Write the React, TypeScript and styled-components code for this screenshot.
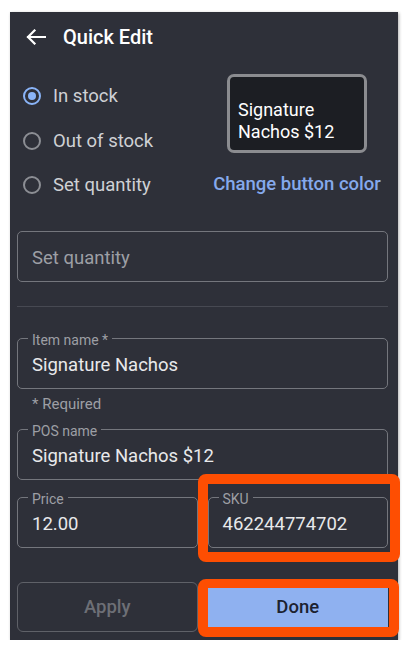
import React from "react";
import styled, { createGlobalStyle } from "styled-components";

const PANEL_BG = "#2e3039";
const FIELD_BORDER = "#74767d";
const MUTED = "#9d9fa5";
const ACCENT = "#8ab4f8";
const MARK = "#fe4e02";

const GlobalStyle = createGlobalStyle`
  body {
    margin: 0;
    background: #ffffff;
    font-family: Roboto, "Noto Sans", sans-serif;
  }
  * {
    box-sizing: border-box;
  }
`;

const Panel = styled.div`
  width: 388px;
  height: 628px;
  margin: 12px 0 0 10px;
  padding: 0 10px 0 7px;
  background: ${PANEL_BG};
  box-shadow: 1px 1px 3px rgba(0, 0, 0, 0.3);
  display: flex;
  flex-direction: column;
`;

const Header = styled.div`
  height: 50px;
  display: flex;
  align-items: center;
  gap: 17px;
  padding-left: 9px;
  color: #ffffff;
`;

const Title = styled.h1`
  margin: 0;
  font-size: 20px;
  font-weight: 500;
  line-height: 24px;
`;

const TopSection = styled.div`
  display: grid;
  grid-template-columns: 196px 168px;
  margin-top: 12px;
`;

const RadioGroup = styled.div`
  display: flex;
  flex-direction: column;
`;

const RadioRow = styled.label`
  height: 44.5px;
  display: flex;
  align-items: center;
  gap: 12px;
  padding-left: 6px;
  font-size: 18.5px;
  color: #cfd1d5;
`;

const RadioCircle = styled.span<{ $checked?: boolean }>`
  width: 18px;
  height: 18px;
  border-radius: 50%;
  border: 2px solid ${({ $checked }) => ($checked ? ACCENT : "#8c8e94")};
  display: flex;
  align-items: center;
  justify-content: center;

  &::after {
    content: "";
    width: 8px;
    height: 8px;
    border-radius: 50%;
    background: ${({ $checked }) => ($checked ? ACCENT : "transparent")};
  }
`;

const PreviewColumn = styled.div`
  display: flex;
  flex-direction: column;
  align-items: center;
`;

const PreviewButton = styled.div`
  width: 140px;
  height: 79px;
  border: 3px solid #8b8c90;
  border-radius: 7px;
  background: #1c1e23;
  color: #ffffff;
  font-size: 18px;
  line-height: 21.5px;
  padding: 0 6px 8px 8px;
  display: flex;
  flex-direction: column;
  justify-content: flex-end;
`;

const ColorLink = styled.span`
  margin-top: 19px;
  font-size: 18.5px;
  font-weight: 500;
  line-height: 24px;
  color: #85a9ec;
  white-space: nowrap;
`;

const Field = styled.div<{ $mt: number }>`
  position: relative;
  height: 51px;
  margin-top: ${({ $mt }) => $mt}px;
  border: 1px solid ${FIELD_BORDER};
  border-radius: 5px;
  padding: 14px 14px 11px;
  font-size: 18.5px;
  line-height: 24px;
  color: #e8e9eb;
`;

const Placeholder = styled.span`
  color: ${MUTED};
`;

const FieldLabel = styled.span`
  position: absolute;
  top: -7px;
  left: 10px;
  padding: 0 4px;
  background: ${PANEL_BG};
  font-size: 14px;
  line-height: 16px;
  color: ${MUTED};
`;

const Divider = styled.hr`
  margin: 24px 0 0;
  border: none;
  height: 1px;
  background: #474952;
`;

const Helper = styled.div`
  margin-top: 5px;
  padding-left: 15px;
  font-size: 15px;
  line-height: 20px;
  color: ${MUTED};
`;

const Pair = styled.div<{ $mt: number }>`
  display: grid;
  grid-template-columns: 1fr 1fr;
  gap: 10px;
  margin-top: ${({ $mt }) => $mt}px;
`;

const Marked = styled.div`
  position: relative;
`;

const MarkFrame = styled.div<{ $t: number; $r: number; $b: number; $l: number }>`
  position: absolute;
  top: ${({ $t }) => $t}px;
  right: ${({ $r }) => $r}px;
  bottom: ${({ $b }) => $b}px;
  left: ${({ $l }) => $l}px;
  border: 10px solid ${MARK};
  border-top-width: ${({ $t }) => ($t > -5 ? 9 : 10)}px;
  border-radius: 8px;
  pointer-events: none;
`;

const ActionButton = styled.button<{ $primary?: boolean }>`
  width: 100%;
  height: 50px;
  font-family: inherit;
  font-size: 18.5px;
  font-weight: 500;
  border-radius: ${({ $primary }) => ($primary ? 3 : 6)}px;
  border: ${({ $primary }) => ($primary ? "none" : `1px solid #5f6168`)};
  background: ${({ $primary }) => ($primary ? "#8fb1f0" : "transparent")};
  color: ${({ $primary }) => ($primary ? "#1c2230" : "#6d6f76")};
`;

const BackArrow = () => (
  <svg width="20" height="16" viewBox="0 0 20 16" fill="none">
    <path
      d="M19 8H2M8.5 1.5L2 8l6.5 6.5"
      stroke="#ffffff"
      strokeWidth="2.2"
      strokeLinecap="square"
    />
  </svg>
);

const stockOptions = [
  { label: "In stock", checked: true },
  { label: "Out of stock", checked: false },
  { label: "Set quantity", checked: false },
];

export default function App() {
  return (
    <>
      <GlobalStyle />
      <Panel>
        <Header>
          <BackArrow />
          <Title>Quick Edit</Title>
        </Header>

        <TopSection>
          <RadioGroup>
            {stockOptions.map((o) => (
              <RadioRow key={o.label}>
                <RadioCircle $checked={o.checked} />
                {o.label}
              </RadioRow>
            ))}
          </RadioGroup>
          <PreviewColumn>
            <PreviewButton>
              <span>Signature</span>
              <span>Nachos $12</span>
            </PreviewButton>
            <ColorLink>Change button color</ColorLink>
          </PreviewColumn>
        </TopSection>

        <Field $mt={23}>
          <Placeholder>Set quantity</Placeholder>
        </Field>

        <Divider />

        <Field $mt={31}>
          <FieldLabel>Item name *</FieldLabel>
          Signature Nachos
        </Field>
        <Helper>* Required</Helper>

        <Field $mt={15}>
          <FieldLabel>POS name</FieldLabel>
          Signature Nachos $12
        </Field>

        <Pair $mt={17}>
          <Field $mt={0}>
            <FieldLabel>Price</FieldLabel>
            12.00
          </Field>
          <Marked>
            <Field $mt={0}>
              <FieldLabel>SKU</FieldLabel>
              462244774702
            </Field>
            <MarkFrame $t={-23} $r={-12} $b={-14} $l={-10} />
          </Marked>
        </Pair>

        <Pair $mt={34}>
          <ActionButton>Apply</ActionButton>
          <Marked>
            <ActionButton $primary>Done</ActionButton>
            <MarkFrame $t={-3} $r={-11} $b={-5} $l={-10} />
          </Marked>
        </Pair>
      </Panel>
    </>
  );
}
